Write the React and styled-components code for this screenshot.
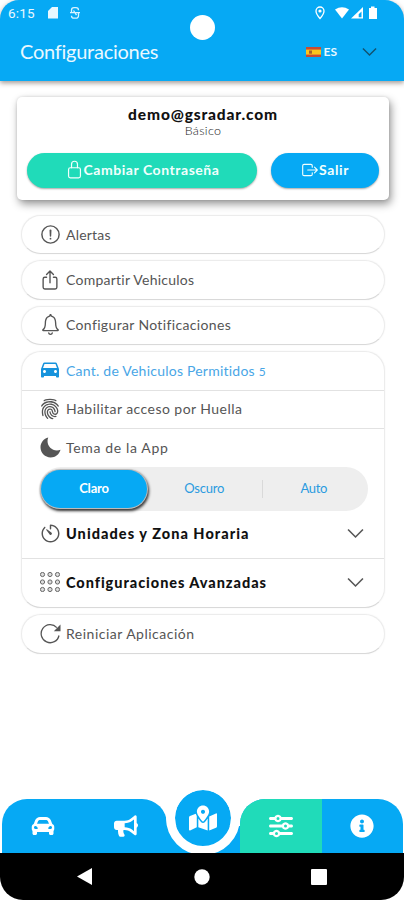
import React, { useState } from "react";
import styled, { createGlobalStyle, css } from "styled-components";
import {
  IoIosNotificationsOutline,
  IoIosTimer,
  IoMdCar,
  IoMdMoon,
} from "react-icons/io";
import {
  IoAlertCircleOutline,
  IoExitOutline,
  IoFingerPrint,
  IoLockClosedOutline,
  IoShareOutline,
} from "react-icons/io5";
import {
  FaBullhorn,
  FaCarAlt,
  FaInfoCircle,
  FaMapMarkedAlt,
} from "react-icons/fa";
import { FaSliders } from "react-icons/fa6";

const BLUE = "#06a9f4";
const GREEN = "#20dbb9";

const GlobalStyle = createGlobalStyle`
  * {
    box-sizing: border-box;
  }
  body {
    margin: 0;
    background: #fff;
    font-family: Lato, "Liberation Sans", sans-serif;
  }
  button {
    font-family: inherit;
    border: none;
    padding: 0;
    background: none;
  }
  svg {
    display: block;
    flex: none;
  }
`;

const Screen = styled.div`
  width: 404px;
  height: 900px;
  display: flex;
  flex-direction: column;
  background: #fff;
  overflow: hidden;
`;

const Header = styled.header`
  position: relative;
  height: 81px;
  flex: none;
  background: ${BLUE};
  border-radius: 19px 19px 0 0;
  box-shadow: 0 2px 5px rgba(70, 50, 40, 0.5);
  color: #e9f8ff;
`;

const StatusBar = styled.div`
  height: 25px;
  padding: 0 26px 0 8px;
  display: flex;
  align-items: center;
  justify-content: space-between;
`;

const StatusGroup = styled.div`
  display: flex;
  align-items: center;
`;

const Clock = styled.span`
  width: 40px;
  font-family: Roboto, sans-serif;
  font-size: 13.5px;
  letter-spacing: 0.2px;
`;

const Camera = styled.div`
  position: absolute;
  top: 15px;
  left: 190px;
  width: 25px;
  height: 25px;
  border-radius: 50%;
  background: #fff;
`;

const TitleBar = styled.div`
  height: 53px;
  padding: 0 27px 0 20px;
  display: flex;
  align-items: center;
`;

const Title = styled.h1`
  margin: 0;
  padding-bottom: 1px;
  flex: 1;
  font-size: 20px;
  font-weight: 400;
  letter-spacing: ${(props) => props.$tracking}px;
`;

const Language = styled.span`
  margin: 0 25px 0 3px;
  font-size: 12px;
  font-weight: 700;
`;

const Content = styled.main`
  flex: 1;
  padding: 16px 15px 0 17px;
`;

const AccountCard = styled.section`
  height: 103px;
  padding: 8px 10px 0;
  border-radius: 5px;
  background: #fff;
  text-align: center;
  box-shadow: 2px 4px 8px rgba(0, 0, 0, 0.42), 0 0 3px rgba(0, 0, 0, 0.12);
`;

const Email = styled.div`
  height: 18px;
  line-height: 18px;
  font-size: 15.5px;
  font-weight: 900;
  letter-spacing: ${(props) => props.$tracking}px;
  color: #111;
`;

const Plan = styled.div`
  height: 16px;
  line-height: 16px;
  font-size: 12.5px;
  font-weight: 300;
  letter-spacing: 0.3px;
  color: #222;
`;

const Actions = styled.div`
  display: flex;
  gap: 14px;
  margin-top: 14px;
`;

const ActionButton = styled.button`
  width: ${(props) => props.$width}px;
  height: 35px;
  padding-bottom: 2px;
  display: flex;
  align-items: center;
  justify-content: center;
  border-radius: 18px;
  background: ${(props) => props.$color};
  box-shadow: 0 1px 2px rgba(0, 0, 0, 0.35);
  color: #f2fffd;
  font-size: 14px;
  font-weight: 700;
  letter-spacing: ${(props) => props.$tracking}px;
`;

const Menu = styled.section`
  display: flex;
  flex-direction: column;
  gap: 6px;
  margin: 15px 4px 0 4px;
`;

const panel = css`
  border: 1px solid #ececec;
  border-bottom-color: #d9d9d9;
  border-radius: 20px;
  background: #fff;
  box-shadow: 0 0 2px rgba(0, 0, 0, 0.06);
`;

const Row = styled.div`
  height: ${(props) => props.$height || 39}px;
  display: flex;
  align-items: center;
  padding: 0 17px 1px;
  color: #333;
`;

const PillRow = styled(Row)`
  ${panel}
  height: 39.4px;
`;

const Group = styled.div`
  ${panel}
  height: 257px;

  ${Row} + ${Row} {
    border-top: 1px solid #e2e2e2;
  }
`;

const IconBox = styled.span`
  width: 22px;
  margin-right: 5px;
  display: flex;
  justify-content: center;
  color: ${(props) => props.$color || "#555"};
`;

const Label = styled.span`
  font-size: ${(props) => (props.$bold ? 14.5 : 14)}px;
  font-weight: ${(props) => (props.$bold ? 900 : 400)};
  letter-spacing: ${(props) => props.$tracking || 0}px;
  color: ${(props) => props.$color || (props.$bold ? "#111" : "#555")};
  white-space: nowrap;

  small {
    font-size: 12px;
  }
`;

const RowChevron = styled.span`
  margin-left: auto;
  margin-right: 3px;
`;

const Segmented = styled.div`
  height: 44px;
  margin: 0 16px 0 17px;
  display: flex;
  align-items: center;
  border-radius: 22px;
  background: #eee;
`;

const Segment = styled.button`
  flex: 1;
  height: 38px;
  padding-bottom: 2px;
  border-radius: 20px;
  color: #2b9be0;
  font-size: 13px;
  letter-spacing: ${(props) => props.$tracking || 0}px;

  ${(props) =>
    props.$active &&
    css`
      flex: none;
      width: 106px;
      margin: 0 2px;
      background: ${BLUE};
      color: #fff;
      font-weight: 700;
      box-shadow: 0 0 0 1px #bbb, 1px 2px 3px 1px rgba(0, 0, 0, 0.8);
    `}
`;

const SegmentDivider = styled.i`
  width: 1px;
  height: 18px;
  margin: 0 -3px 0 3px;
  background: ${(props) => (props.$hidden ? "transparent" : "#d9d9d9")};
`;

const TabBar = styled.nav`
  position: relative;
  height: 54px;
  flex: none;
  margin: 0 1px 0 2px;
  display: flex;
  align-items: flex-end;
`;

const TabGroup = styled.div`
  width: ${(props) => props.$width}px;
  height: 54px;
  display: flex;
  border-radius: 25px 25px 0 0;
  background: ${BLUE};
  overflow: hidden;
`;

const Tab = styled.button`
  flex: 1;
  display: flex;
  align-items: center;
  justify-content: center;
  color: #fff;
  background: ${(props) => (props.$active ? GREEN : "transparent")};
`;

const TabBridge = styled.div`
  flex: 1;
  height: 27px;
  background: ${BLUE};
`;

const MapButton = styled.button`
  position: absolute;
  left: 164px;
  top: -18px;
  width: 74px;
  height: 74px;
  display: flex;
  align-items: center;
  justify-content: center;
  border-radius: 50%;
  border: 9px solid #fff;
  background: ${BLUE};
  background-clip: padding-box;
  color: #fff;
`;

const SystemBar = styled.footer`
  position: relative;
  height: 47px;
  flex: none;
  padding: 0 77px;
  display: flex;
  align-items: center;
  justify-content: space-between;
  border-radius: 0 0 23px 23px;
  background: #000;
`;

const Chevron = ({ size, color }) => (
  <svg width={size} height={size / 2} viewBox="0 0 16 8" overflow="visible">
    <path d="M1 0.5l7 7 7-7" fill="none" stroke={color} strokeWidth="1.5" />
  </svg>
);

const SpainFlag = () => (
  <svg width="15" height="10" viewBox="0 0 15 10">
    <rect width="15" height="10" fill="#c84b34" />
    <rect y="2.6" width="15" height="5" fill="#fbc51c" />
    <rect x="3" y="3.5" width="3" height="3.2" fill="#a9622b" />
  </svg>
);

const KeypadIcon = () => (
  <svg width="20" height="20" viewBox="0 0 20 20">
    {[2.5, 10, 17.5].map((y) =>
      [2.5, 10, 17.5].map((x) => (
        <circle
          key={`${x}-${y}`}
          cx={x}
          cy={y}
          r="2.1"
          fill="#ddd"
          stroke="#666"
        />
      ))
    )}
  </svg>
);

const RestartIcon = () => (
  <svg width="21" height="21" viewBox="0 0 21 21">
    <path
      d="M16.8 4.6A9 9 0 1 0 19 12.5"
      fill="none"
      stroke="currentColor"
      strokeWidth="1.3"
    />
    <path d="M20.5 1.5v6.7h-6.7z" fill="currentColor" />
  </svg>
);

const PhoneStatus = () => (
  <StatusBar>
    <StatusGroup>
      <Clock>6:15</Clock>
      <svg width="34" height="14" viewBox="0 0 34 14">
        <path d="M4 1h6v11.5H0V5z" fill="#e9f8ff" />
        <path
          d="M23.5 6.7V4.2a2.5 2.5 0 0 1 2.5-2.5h2a2.5 2.5 0 0 1 2.5 2.5M22 6.7h10M30.5 6.7v3a2.5 2.5 0 0 1-2.5 2.5h-2a2.5 2.5 0 0 1-2.5-2.5M25.5 4.5l3 4.6"
          fill="none"
          stroke="#d9f3ff"
          strokeWidth="1.3"
        />
      </svg>
    </StatusGroup>
    <svg width="63" height="14" viewBox="0 0 63 14">
      <path
        d="M5 1a4 4 0 0 1 4 4c0 3-4 7.5-4 7.5S1 8 1 5a4 4 0 0 1 4-4z"
        fill="none"
        stroke="#fff"
        strokeWidth="1.3"
      />
      <circle cx="5" cy="5" r="1.6" fill="#fff" />
      <path d="M20 3.5Q27 -1 34 3.5L27 12.5z" fill="#fff" />
      <path d="M48 1v11.5H36z" fill="#fff" />
      <path d="M46.5 5.5v5.8h-2.8V8.3z" fill={BLUE} />
      <path d="M56 0.5h3.5v1.5h2.5v11h-8v-11h2z" fill="#fff" />
    </svg>
  </StatusBar>
);

const THEMES = [
  { name: "Claro", tracking: -0.2 },
  { name: "Oscuro", tracking: -0.2 },
  { name: "Auto", tracking: -0.3 },
];

const App = () => {
  const [theme, setTheme] = useState("Claro");

  return (
    <Screen>
      <GlobalStyle />
      <Header>
        <PhoneStatus />
        <Camera />
        <TitleBar>
          <Title $tracking={-0.25}>Configuraciones</Title>
          <SpainFlag />
          <Language>ES</Language>
          <Chevron size={15} color="#12526f" />
        </TitleBar>
      </Header>
      <Content>
        <AccountCard>
          <Email $tracking={0.85}>demo@gsradar.com</Email>
          <Plan>Básico</Plan>
          <Actions>
            <ActionButton $width={230} $color={GREEN} $tracking={0.55}>
              <IoLockClosedOutline size={19} />
              Cambiar Contraseña
            </ActionButton>
            <ActionButton $width={108} $color={BLUE} $tracking={0.6}>
              <IoExitOutline size={18} />
              Salir
            </ActionButton>
          </Actions>
        </AccountCard>
        <Menu>
          <PillRow>
            <IconBox>
              <IoAlertCircleOutline size={23} />
            </IconBox>
            <Label $tracking={0.2}>Alertas</Label>
          </PillRow>
          <PillRow>
            <IconBox>
              <IoShareOutline size={22} />
            </IconBox>
            <Label $tracking={0.25}>Compartir Vehiculos</Label>
          </PillRow>
          <PillRow>
            <IconBox>
              <IoIosNotificationsOutline size={27} />
            </IconBox>
            <Label $tracking={0.35}>Configurar Notificaciones</Label>
          </PillRow>
          <Group>
            <Row $height={37.5}>
              <IconBox $color="#1793dc">
                <IoMdCar size={24} />
              </IconBox>
              <Label $color="#49a6e6" $tracking={0.23}>
                Cant. de Vehiculos Permitidos <small>5</small>
              </Label>
            </Row>
            <Row $height={38.5}>
              <IconBox>
                <IoFingerPrint size={22} />
              </IconBox>
              <Label $tracking={0.45}>Habilitar acceso por Huella</Label>
            </Row>
            <Row $height={38.5}>
              <IconBox>
                <IoMdMoon size={25} />
              </IconBox>
              <Label $tracking={0.65}>Tema de la App</Label>
            </Row>
            <Segmented>
              {THEMES.map(({ name, tracking }, index) => (
                <React.Fragment key={name}>
                  {index > 0 && <SegmentDivider $hidden={index === 1} />}
                  <Segment
                    $active={theme === name}
                    $tracking={tracking}
                    onClick={() => setTheme(name)}
                  >
                    {name}
                  </Segment>
                </React.Fragment>
              ))}
            </Segmented>
            <Row $height={47}>
              <IconBox>
                <IoIosTimer size={23} />
              </IconBox>
              <Label $bold $tracking={1.05}>
                Unidades y Zona Horaria
              </Label>
              <RowChevron>
                <Chevron size={17} color="#555" />
              </RowChevron>
            </Row>
            <Row $height={49}>
              <IconBox>
                <KeypadIcon />
              </IconBox>
              <Label $bold $tracking={0.95}>
                Configuraciones Avanzadas
              </Label>
              <RowChevron>
                <Chevron size={17} color="#555" />
              </RowChevron>
            </Row>
          </Group>
          <PillRow>
            <IconBox>
              <RestartIcon />
            </IconBox>
            <Label $tracking={0.5}>Reiniciar Aplicación</Label>
          </PillRow>
        </Menu>
      </Content>
      <TabBar>
        <TabGroup $width={165}>
          <Tab>
            <FaCarAlt size={24} />
          </Tab>
          <Tab>
            <FaBullhorn size={24} />
          </Tab>
        </TabGroup>
        <TabBridge />
        <TabGroup $width={163}>
          <Tab $active>
            <FaSliders size={24} />
          </Tab>
          <Tab>
            <FaInfoCircle size={24} />
          </Tab>
        </TabGroup>
        <MapButton>
          <FaMapMarkedAlt size={28} />
        </MapButton>
      </TabBar>
      <SystemBar>
        <svg width="15" height="17" viewBox="0 0 15 17">
          <path d="M15 0v17L0 8.5z" fill="#fff" />
        </svg>
        <svg width="16" height="16" viewBox="0 0 16 16">
          <circle cx="8" cy="8" r="7.7" fill="#fff" />
        </svg>
        <svg width="16" height="16" viewBox="0 0 16 16">
          <rect width="16" height="16" rx="1" fill="#fff" />
        </svg>
      </SystemBar>
    </Screen>
  );
};

export default App;
